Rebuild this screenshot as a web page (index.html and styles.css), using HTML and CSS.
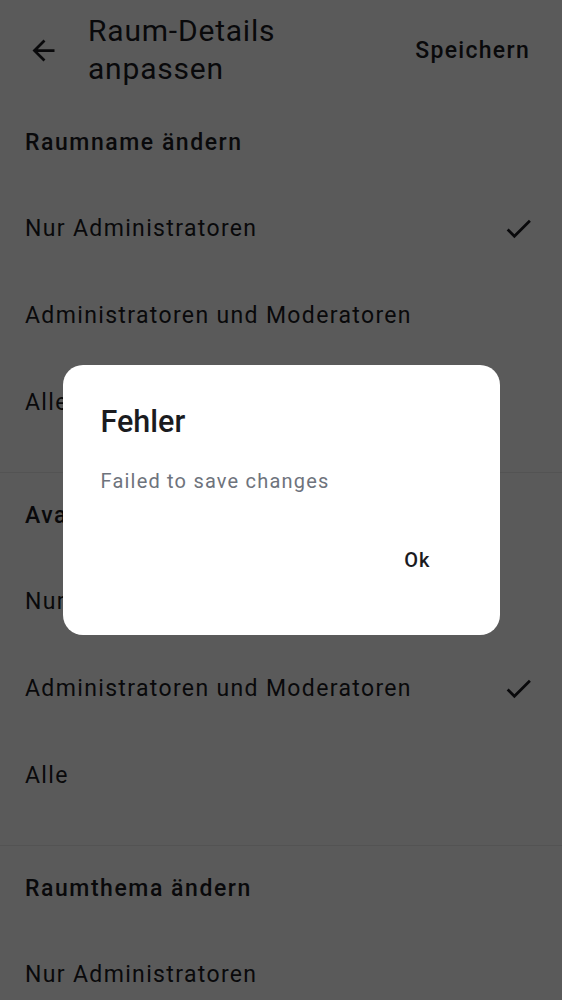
FILE: index.html
```html
<!DOCTYPE html>
<html lang="de">
<head>
<meta charset="utf-8">
<title>Raum-Details anpassen</title>
<link rel="stylesheet" href="styles.css">
</head>
<body>
<div class="screen">
  <header class="appbar">
    <button class="icon-btn back" aria-label="Zurück">
      <svg viewBox="0 0 24 24" width="33" height="33"><path d="M20 11H7.83l5.59-5.59L12 4l-8 8 8 8 1.41-1.41L7.83 13H20v-2z"/></svg>
    </button>
    <h1 class="title">Raum-Details anpassen</h1>
    <button class="save">Speichern</button>
  </header>

  <section class="section">
    <h2 class="section-head">Raumname ändern</h2>
    <div class="row"><span>Nur Administratoren</span><svg class="check" viewBox="0 0 24 24" width="33" height="33"><path d="M9 16.17L4.83 12l-1.42 1.41L9 19 21 7l-1.41-1.41z"/></svg></div>
    <div class="row"><span>Administratoren und Moderatoren</span></div>
    <div class="row"><span>Alle</span></div>
  </section>

  <section class="section">
    <h2 class="section-head">Avatar ändern</h2>
    <div class="row"><span>Nur Administratoren</span></div>
    <div class="row"><span>Administratoren und Moderatoren</span><svg class="check" viewBox="0 0 24 24" width="33" height="33"><path d="M9 16.17L4.83 12l-1.42 1.41L9 19 21 7l-1.41-1.41z"/></svg></div>
    <div class="row"><span>Alle</span></div>
  </section>

  <section class="section last">
    <h2 class="section-head">Raumthema ändern</h2>
    <div class="row"><span>Nur Administratoren</span></div>
  </section>
</div>

<div class="scrim">
  <div class="dialog" role="alertdialog">
    <h3 class="dialog-title">Fehler</h3>
    <p class="dialog-text">Failed to save changes</p>
    <div class="dialog-actions">
      <button class="dialog-btn">Ok</button>
    </div>
  </div>
</div>
</body>
</html>
```

FILE: styles.css
```css
* { box-sizing: border-box; }

html, body {
  margin: 0;
  padding: 0;
  background: #ffffff;
  font-family: Roboto, "Noto Sans", "Liberation Sans", sans-serif;
  color: #1b1b1f;
  overflow: hidden;
}

.screen {
  width: 562px;
  height: 1000px;
  overflow: hidden;
}

button {
  font-family: inherit;
  background: none;
  border: 0;
  padding: 0;
  color: inherit;
  cursor: pointer;
}

.appbar {
  display: flex;
  align-items: center;
  height: 100px;
  padding: 0 33px 0 27px;
}

.icon-btn {
  width: 33px;
  height: 33px;
  display: flex;
  align-items: center;
  justify-content: center;
  margin-right: 28px;
}

.icon-btn svg { fill: #1b1b1f; }

.title {
  flex: 1;
  margin: 0;
  font-size: 30px;
  line-height: 38px;
  font-weight: 400;
  letter-spacing: 0.8px;
  max-width: 240px;
}

.save {
  margin-left: auto;
  font-size: 23px;
  font-weight: 500;
  letter-spacing: 1.3px;
  margin-right: -1px;
}

.section {
  border-bottom: 1px solid #ececec;
  padding-bottom: 26px;
}

.section.last {
  border-bottom: 0;
}

.section-head {
  margin: 0;
  height: 85px;
  display: flex;
  align-items: center;
  padding: 0 25px;
  font-size: 23px;
  font-weight: 500;
  letter-spacing: 1.55px;
}

.row {
  height: 87px;
  display: flex;
  align-items: center;
  justify-content: space-between;
  padding: 0 27px 0 25px;
  font-size: 23px;
  letter-spacing: 1.35px;
}

.check { fill: #1b1b1f; }

.scrim {
  position: fixed;
  inset: 0;
  background: rgba(0, 0, 0, 0.647);
  display: flex;
  align-items: center;
  justify-content: center;
}

.dialog {
  width: 437px;
  height: 270px;
  background: #ffffff;
  border-radius: 20px;
  padding: 35px 37px 0 38px;
  display: flex;
  flex-direction: column;
}

.dialog-title {
  margin: 0;
  font-size: 30.5px;
  line-height: 44px;
  font-weight: 500;
  color: #1b1b1f;
}

.dialog-text {
  margin: 24px 0 0;
  font-size: 20px;
  line-height: 27px;
  letter-spacing: 1.2px;
  color: #6e737c;
}

.dialog-actions {
  display: flex;
  justify-content: flex-end;
  margin-top: 37px;
}

.dialog-btn {
  height: 55px;
  padding: 0 32px;
  font-size: 20px;
  font-weight: 500;
  letter-spacing: 1px;
  color: #1b1b1f;
}
```
